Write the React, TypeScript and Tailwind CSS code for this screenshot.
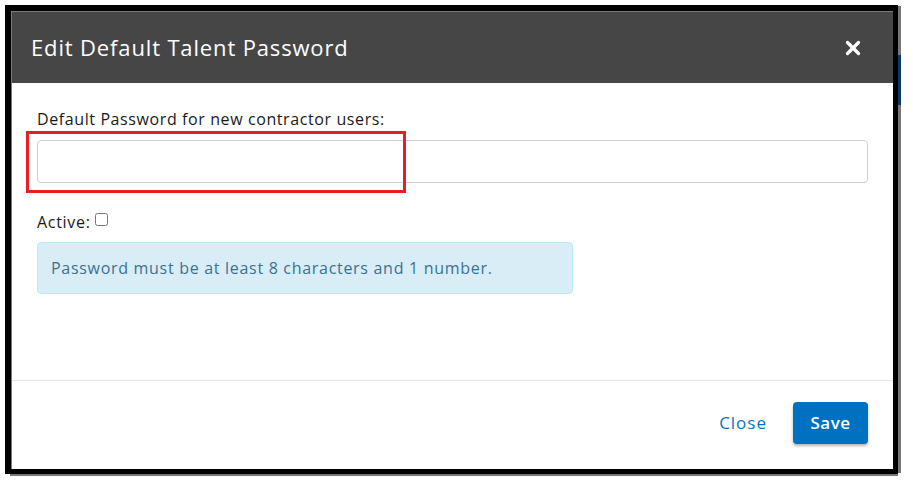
import { X } from "lucide-react";

export default function App() {
  return (
    <div className="relative w-[913px] h-[481px] bg-white" style={{ fontFamily: '"Open Sans", "Liberation Sans", sans-serif' }}>
      {/* screenshot frame */}
      <div className="absolute left-[5px] top-[5px] w-[893px] h-[469px] bg-black pl-[6px] pt-[6px] pr-[5px] pb-[5px]">
        <div className="flex flex-col w-full h-full bg-white border-l border-t border-[#7a7a7a]">
          {/* header */}
          <div className="flex items-center justify-between h-[71px] bg-[#464646] pl-[19px] pr-[29px]">
            <h1 className="text-[22px] text-white tracking-[0.85px]">Edit Default Talent Password</h1>
            <X className="w-[22px] h-[22px] text-white" strokeWidth={3.5} />
          </div>

          {/* body */}
          <div className="flex-1 px-[25px] pt-[25px]">
            <label className="block text-[16px] font-medium text-[#1a1a1a] leading-[22px] tracking-[0.6px]">
              Default Password for new contractor users:
            </label>
            <input
              type="text"
              className="mt-[10px] block w-[831px] h-[43px] rounded-[4px] border border-[#cfcfcf] bg-white outline-none"
            />
            <div className="mt-[27px] flex items-center gap-[4px]">
              <span className="text-[16px] font-medium text-[#1a1a1a] tracking-[0.7px]">Active:</span>
              <input type="checkbox" className="w-[13px] h-[13px] -mt-[6px]" />
            </div>
            <div className="mt-[8px] w-[536px] h-[52px] flex items-center rounded-[4px] border border-[#bce8f1] bg-[#d9edf7] px-[13px]">
              <span className="text-[16px] text-[#3a7294] tracking-[0.7px]">Password must be at least 8 characters and 1 number.</span>
            </div>
          </div>

          {/* footer */}
          <div className="flex items-center justify-end gap-[26px] h-[89px] border-t border-[#e5e5e5] pr-[25px] pb-[4px]">
            <button className="text-[17px] text-[#0a72c2] tracking-[1px]">Close</button>
            <button className="w-[75px] h-[42px] rounded-[4px] bg-[#0070c0] text-[17px] font-semibold text-white tracking-[0.5px] shadow-[0_2px_3px_rgba(0,0,0,0.3)]">
              Save
            </button>
          </div>
        </div>
      </div>
      {/* gray strip right of frame */}
      <div className="absolute left-[898px] top-[6px] w-[3px] h-[467px] bg-[#777]" />
      <div className="absolute left-[898px] top-[55px] w-[3px] h-[50px] bg-[#0b3a66]" />
      <div className="absolute left-[10px] top-[474px] w-[888px] h-[2px] bg-[#777]" />

      {/* red annotation */}
      <div className="absolute left-[26px] top-[131px] w-[380px] h-[62px] border-[3px] border-[#ec1c24]" />
    </div>
  );
}
